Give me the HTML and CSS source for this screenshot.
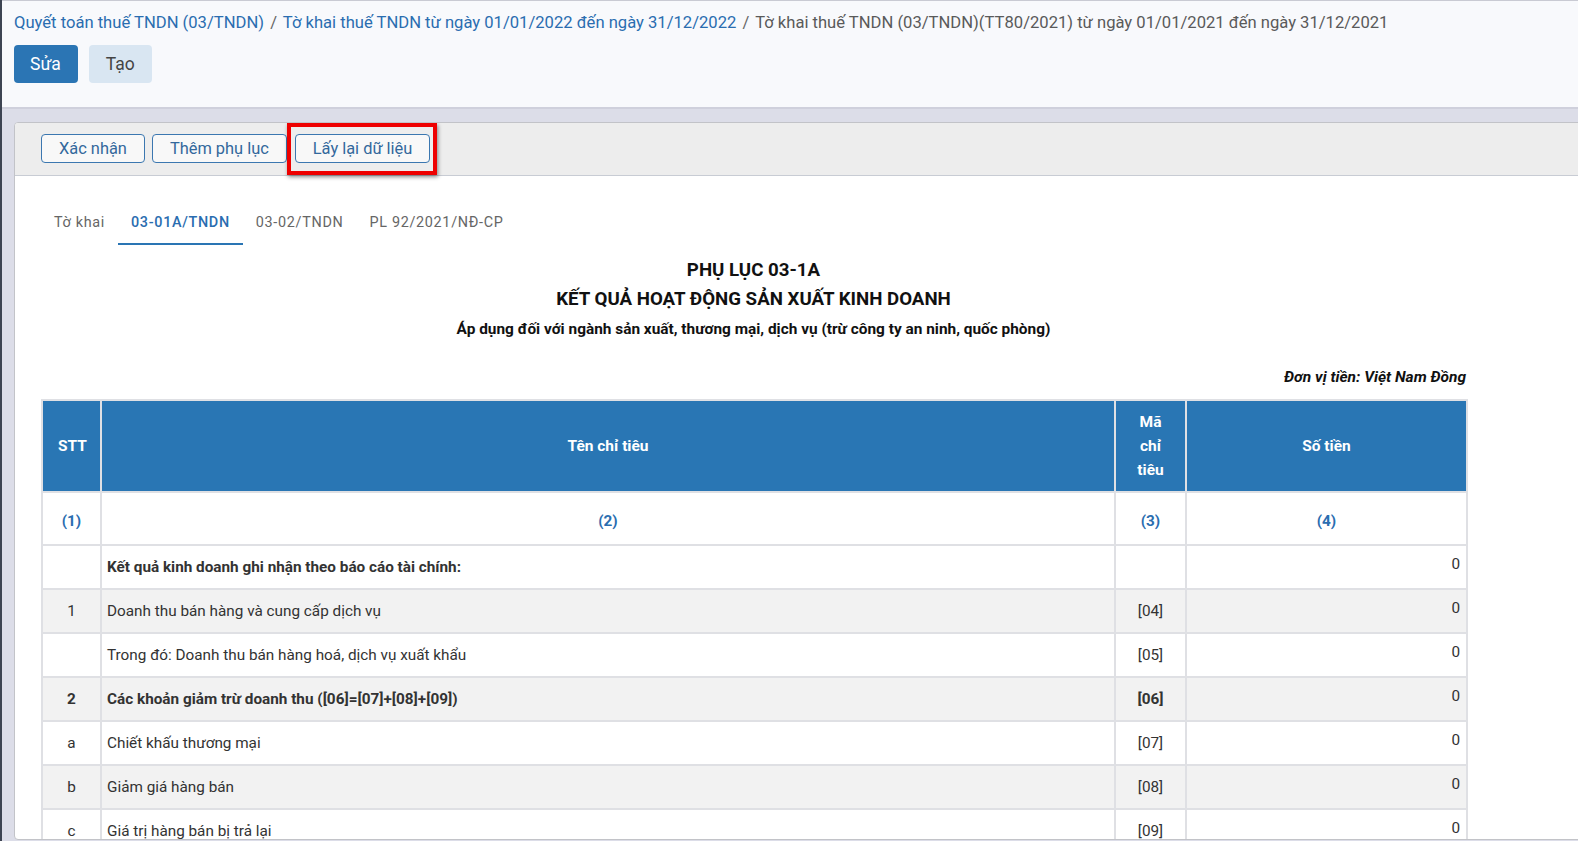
FILE: index.html
```html
<!DOCTYPE html>
<html lang="vi">
<head>
<meta charset="utf-8">
<title>Phụ lục 03-1A</title>
<link rel="stylesheet" href="styles.css">
</head>
<body>
<div class="app">
  <header class="page-head">
    <nav class="crumbs">
      <a class="crumb-link">Quyết toán thuế TNDN (03/TNDN)</a>
      <span class="sep">/</span>
      <a class="crumb-link">Tờ khai thuế TNDN từ ngày 01/01/2022 đến ngày 31/12/2022</a>
      <span class="sep">/</span>
      <span class="crumb-current">Tờ khai thuế TNDN (03/TNDN)(TT80/2021) từ ngày 01/01/2021 đến ngày 31/12/2021</span>
    </nav>
    <div class="head-actions">
      <button class="btn btn-primary">Sửa</button>
      <button class="btn btn-light">Tạo</button>
    </div>
  </header>

  <main class="stage">
    <section class="card">
      <div class="toolbar">
        <button class="tbtn">Xác nhận</button>
        <button class="tbtn">Thêm phụ lục</button>
        <span class="highlight"><button class="tbtn">Lấy lại dữ liệu</button></span>
      </div>

      <div class="card-body">
        <ul class="tabs">
          <li class="tab">Tờ khai</li>
          <li class="tab active">03-01A/TNDN</li>
          <li class="tab">03-02/TNDN</li>
          <li class="tab">PL 92/2021/NĐ-CP</li>
        </ul>

        <div class="sheet">
          <h1 class="title">PHỤ LỤC 03-1A<br>KẾT QUẢ HOẠT ĐỘNG SẢN XUẤT KINH DOANH</h1>
          <p class="subtitle">Áp dụng đối với ngành sản xuất, thương mại, dịch vụ (trừ công ty an ninh, quốc phòng)</p>
          <p class="unit">Đơn vị tiền: Việt Nam Đồng</p>

          <table class="grid">
            <colgroup>
              <col class="c-stt">
              <col class="c-name">
              <col class="c-code">
              <col class="c-amt">
            </colgroup>
            <thead>
              <tr>
                <th>STT</th>
                <th>Tên chỉ tiêu</th>
                <th>Mã chỉ tiêu</th>
                <th>Số tiền</th>
              </tr>
            </thead>
            <tbody>
              <tr class="idx">
                <td>(1)</td><td>(2)</td><td>(3)</td><td>(4)</td>
              </tr>
              <tr>
                <td class="stt"></td>
                <td class="name strong">Kết quả kinh doanh ghi nhận theo báo cáo tài chính:</td>
                <td class="code"></td>
                <td class="amt">0</td>
              </tr>
              <tr class="alt">
                <td class="stt">1</td>
                <td class="name">Doanh thu bán hàng và cung cấp dịch vụ</td>
                <td class="code">[04]</td>
                <td class="amt">0</td>
              </tr>
              <tr>
                <td class="stt"></td>
                <td class="name">Trong đó: Doanh thu bán hàng hoá, dịch vụ xuất khẩu</td>
                <td class="code">[05]</td>
                <td class="amt">0</td>
              </tr>
              <tr class="alt">
                <td class="stt strong">2</td>
                <td class="name strong">Các khoản giảm trừ doanh thu ([06]=[07]+[08]+[09])</td>
                <td class="code strong">[06]</td>
                <td class="amt">0</td>
              </tr>
              <tr>
                <td class="stt">a</td>
                <td class="name">Chiết khấu thương mại</td>
                <td class="code">[07]</td>
                <td class="amt">0</td>
              </tr>
              <tr class="alt">
                <td class="stt">b</td>
                <td class="name">Giảm giá hàng bán</td>
                <td class="code">[08]</td>
                <td class="amt">0</td>
              </tr>
              <tr>
                <td class="stt">c</td>
                <td class="name">Giá trị hàng bán bị trả lại</td>
                <td class="code">[09]</td>
                <td class="amt">0</td>
              </tr>
              <tr class="alt">
                <td class="stt">3</td>
                <td class="name">Doanh thu thuần</td>
                <td class="code">[10]</td>
                <td class="amt">0</td>
              </tr>
            </tbody>
          </table>
        </div>
      </div>
    </section>
  </main>
</div>
</body>
</html>
```

FILE: styles.css
```css
* { box-sizing: border-box; }

html, body {
  margin: 0;
  height: 100%;
  overflow: hidden;
}

body {
  font-family: Roboto, "Liberation Sans", Arial, sans-serif;
  color: #333;
  background: #dcdde8;
}

.app {
  height: 100vh;
  display: flex;
  flex-direction: column;
  border-left: 2px solid #3d4452;
}

/* ---------- header ---------- */
.page-head {
  background: #f8f9fc;
  border-top: 1px solid #c9cad3;
  border-bottom: 2px solid #cfd0dc;
  padding: 11px 12px 24px;
}

.crumbs {
  font-size: 16.6px;
  line-height: 22px;
  white-space: nowrap;
}

.crumb-link {
  color: #2a6db0;
  text-decoration: none;
}

.crumb-current {
  color: #5a5a5a;
}

.sep {
  color: #666;
  margin: 0 2px;
}

.head-actions {
  display: flex;
  gap: 11px;
  margin-top: 11px;
}

.btn {
  font-family: inherit;
  font-size: 17.5px;
  height: 38px;
  padding: 0 16px;
  border: none;
  border-radius: 4px;
  cursor: pointer;
}

.btn-primary {
  background: #2b75b4;
  color: #fff;
  padding: 0 17px 0 16px;
}

.btn-light {
  background: #d9e6f2;
  color: #444;
  padding: 0 17px;
}

/* ---------- stage / card ---------- */
.stage {
  flex: 1;
  min-height: 0;
  padding: 13px 0 1px 12px;
  display: flex;
}

.card {
  flex: 1;
  margin-right: -20px;
  background: #fff;
  border: 1px solid #c2c3c8;
  border-radius: 4px 0 0 4px;
  overflow: hidden;
  display: flex;
  flex-direction: column;
}

.toolbar {
  background: #ededed;
  border-bottom: 1px solid #c8ccd4;
  padding: 11px 26px 12px;
  display: flex;
  gap: 7px;
}

.tbtn {
  font-family: inherit;
  font-size: 16.4px;
  height: 29px;
  padding: 0 17px;
  background: #f8f8f8;
  color: #33689c;
  border: 1px solid #3b77b0;
  border-radius: 4px;
  cursor: pointer;
}

.highlight {
  position: relative;
  margin-left: 1px;
  display: flex;
}

.highlight::after {
  content: "";
  position: absolute;
  left: -8px;
  top: -11px;
  right: -7px;
  bottom: -12px;
  border: 4px solid #ee0000;
  box-shadow: 1px 2px 4px rgba(0, 0, 0, 0.45);
  pointer-events: none;
}

.card-body {
  padding: 26px 26px 0;
}

/* ---------- tabs ---------- */
.tabs {
  list-style: none;
  margin: 0;
  padding: 0;
  display: flex;
}

.tab {
  font-size: 14.4px;
  line-height: 20px;
  letter-spacing: 0.68px;
  color: #666;
  padding: 11px 13px 10px;
  border-bottom: 2px solid transparent;
}

.tab.active {
  color: #2a6db0;
  font-weight: 500;
  border-bottom-color: #2a75b4;
}

/* ---------- sheet ---------- */
.sheet {
  width: 1425px;
  margin-top: 11px;
}

.title {
  margin: 0;
  text-align: center;
  font-size: 18.7px;
  line-height: 29px;
  font-weight: 700;
  color: #111;
}

.subtitle {
  margin: 5px 0 0;
  text-align: center;
  font-size: 15.4px;
  line-height: 20px;
  font-weight: 700;
  color: #111;
}

.unit {
  margin: 28px 0 0;
  text-align: right;
  font-size: 15.5px;
  line-height: 20px;
  font-weight: 700;
  font-style: italic;
  color: #111;
}

/* ---------- table ---------- */
.grid {
  margin-top: 12px;
  width: 1425px;
  table-layout: fixed;
  border-collapse: collapse;
  font-size: 15.3px;
}

.c-stt { width: 59px; }
.c-name { width: 1014px; }
.c-code { width: 71px; }
.c-amt { width: 281px; }

.grid th,
.grid td {
  border: 2px solid #dfe0e4;
}

.grid th {
  background: #2976b4;
  color: #fff;
  font-weight: 700;
  font-size: 15.5px;
  line-height: 24px;
  padding: 9px 15px;
  text-align: center;
}

.grid td {
  line-height: 20px;
  padding: 11px 5px;
  color: #333;
}

.grid tr.idx td {
  text-align: center;
  color: #2a6db0;
  font-weight: 700;
  padding: 18px 5px 13px;
}

.grid tr.alt td {
  background: #f2f2f2;
}

.grid td.stt,
.grid td.code {
  text-align: center;
}

.grid td.amt {
  text-align: right;
  vertical-align: top;
  padding: 8px 6px 14px;
}

.strong {
  font-weight: 700;
  color: #111;
}
```
